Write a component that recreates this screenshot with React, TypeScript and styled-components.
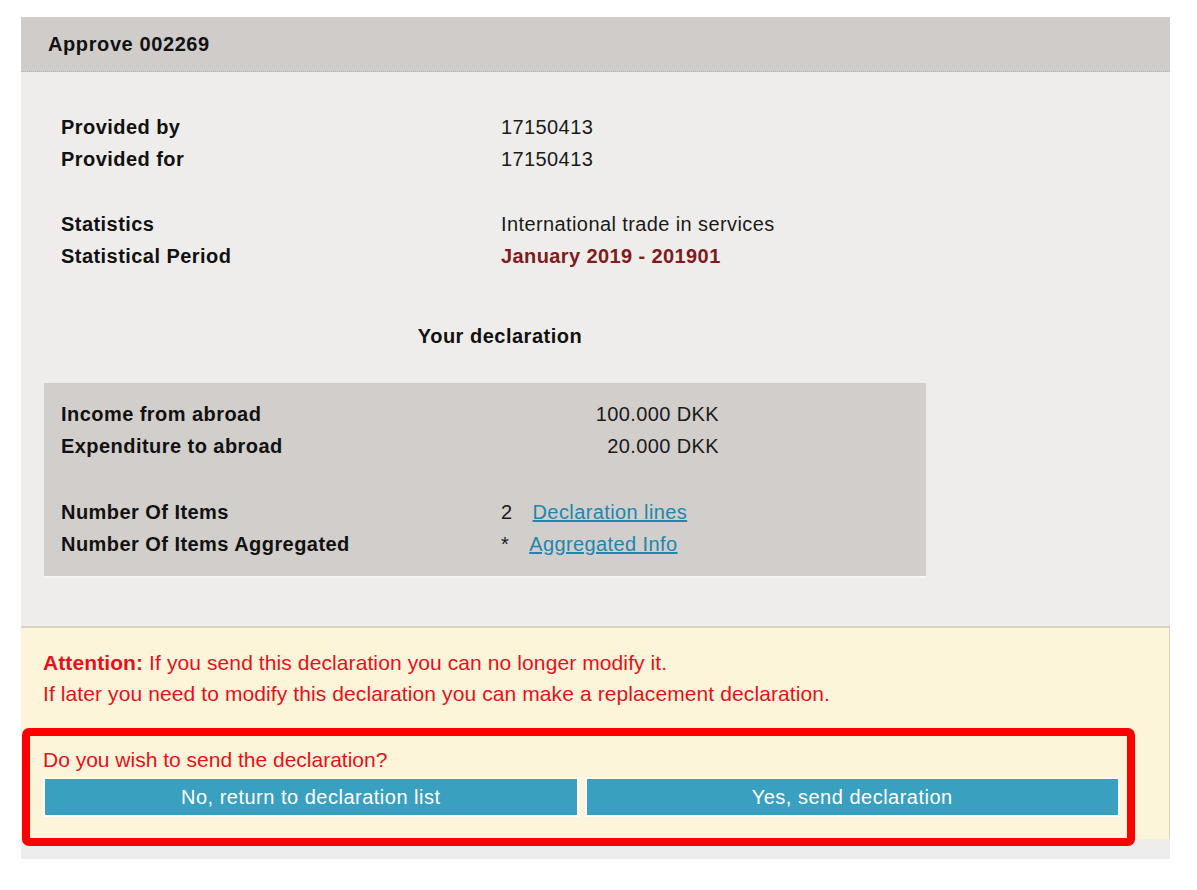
import React from 'react';
import styled, { createGlobalStyle } from 'styled-components';

const GlobalStyle = createGlobalStyle`
  body {
    margin: 0;
    background: #ffffff;
    font-family: 'Liberation Sans', Arial, sans-serif;
  }
`;

const Page = styled.div`
  padding: 17px 27px 32px 21px;
`;

const Panel = styled.div`
  width: 1149px;
  background: #efedeb;
`;

const PanelHeader = styled.div`
  height: 54px;
  display: flex;
  align-items: center;
  padding-left: 27px;
  background: #d0ccc9;
  border-bottom: 1px dotted #b9b4ae;
  color: #111111;
  font-size: 20px;
  font-weight: bold;
  letter-spacing: 0.6px;
`;

const PanelBody = styled.div`
  padding: 39px 0 20px;
`;

const InfoGroup = styled.div<{ $gap?: number }>`
  display: grid;
  grid-template-columns: 440px 1fr;
  padding-left: 40px;
  margin-bottom: ${(p) => p.$gap ?? 0}px;
`;

const Label = styled.div`
  height: 32px;
  line-height: 32px;
  font-size: 20px;
  font-weight: bold;
  letter-spacing: 0.45px;
  color: #111111;
`;

const Value = styled.div<{ $tone?: 'period' }>`
  height: 32px;
  line-height: 32px;
  font-size: 20px;
  letter-spacing: 0.4px;
  color: ${(p) => (p.$tone === 'period' ? '#801b1e' : '#1a1a1a')};
  font-weight: ${(p) => (p.$tone === 'period' ? 'bold' : 'normal')};
`;

const SectionTitle = styled.div`
  width: 878px;
  margin: 48px 0 31px 40px;
  text-align: center;
  line-height: 32px;
  font-size: 20px;
  font-weight: bold;
  letter-spacing: 0.5px;
  color: #111111;
`;

const SummaryBox = styled.div`
  width: 882px;
  margin-left: 23px;
  padding: 15px 0 16px;
  background: #d1cecb;
  border-bottom: 2px solid #f6f5f4;
  box-sizing: border-box;
`;

const SummaryGroup = styled.div<{ $gap?: number }>`
  display: grid;
  grid-template-columns: 440px 1fr;
  padding-left: 17px;
  margin-bottom: ${(p) => p.$gap ?? 0}px;
`;

const Amount = styled(Value)`
  width: 218px;
  text-align: right;
`;

const CountCell = styled(Value)`
  display: flex;
  gap: 20px;
`;

const InfoLink = styled.a`
  color: #1f86ad;
  text-decoration: underline;
  cursor: pointer;
`;

const Notice = styled.div`
  margin-top: 48px;
  padding: 19px 49px 22px 22px;
  background: #fdf5da;
  border-top: 2px solid #ddd1bf;
  border-right: 1px solid #ddd1bf;
`;

const NoticeLine = styled.div`
  line-height: 31px;
  font-size: 21px;
  letter-spacing: 0.1px;
  color: #e8101a;

  strong {
    font-weight: bold;
  }
`;

const Confirm = styled.div`
  position: relative;
  margin-top: 35px;

  &::after {
    content: '';
    position: absolute;
    left: -21px;
    right: -15px;
    top: -16px;
    bottom: -29px;
    border: 8px solid #ff0000;
    border-radius: 7px;
    pointer-events: none;
  }
`;

const Question = styled(NoticeLine)`
  line-height: 32px;
  letter-spacing: 0;
`;

const ButtonRow = styled.div`
  display: grid;
  grid-template-columns: 1fr 1fr;
  gap: 6px;
  margin-top: 1px;
`;

const ActionButton = styled.button`
  height: 40px;
  border: 2px solid #ffffff;
  background: #3aa0bf;
  color: #ffffff;
  font-family: 'Liberation Sans', Arial, sans-serif;
  font-size: 20px;
  letter-spacing: 0.5px;
  cursor: pointer;
`;

export default function App() {
  return (
    <>
      <GlobalStyle />
      <Page>
        <Panel>
          <PanelHeader>Approve 002269</PanelHeader>
          <PanelBody>
            <InfoGroup $gap={33}>
              <Label>Provided by</Label>
              <Value>17150413</Value>
              <Label>Provided for</Label>
              <Value>17150413</Value>
            </InfoGroup>
            <InfoGroup>
              <Label>Statistics</Label>
              <Value>International trade in services</Value>
              <Label>Statistical Period</Label>
              <Value $tone="period">January 2019 - 201901</Value>
            </InfoGroup>

            <SectionTitle>Your declaration</SectionTitle>

            <SummaryBox>
              <SummaryGroup $gap={34}>
                <Label>Income from abroad</Label>
                <Amount>100.000 DKK</Amount>
                <Label>Expenditure to abroad</Label>
                <Amount>20.000 DKK</Amount>
              </SummaryGroup>
              <SummaryGroup>
                <Label>Number Of Items</Label>
                <CountCell>
                  <span>2</span>
                  <InfoLink>Declaration lines</InfoLink>
                </CountCell>
                <Label>Number Of Items Aggregated</Label>
                <CountCell>
                  <span>*</span>
                  <InfoLink>Aggregated Info</InfoLink>
                </CountCell>
              </SummaryGroup>
            </SummaryBox>

            <Notice>
              <NoticeLine>
                <strong>Attention:</strong> If you send this declaration you can no longer modify it.
              </NoticeLine>
              <NoticeLine>
                If later you need to modify this declaration you can make a replacement declaration.
              </NoticeLine>
              <Confirm>
                <Question>Do you wish to send the declaration?</Question>
                <ButtonRow>
                  <ActionButton>No, return to declaration list</ActionButton>
                  <ActionButton>Yes, send declaration</ActionButton>
                </ButtonRow>
              </Confirm>
            </Notice>
          </PanelBody>
        </Panel>
      </Page>
    </>
  );
}
